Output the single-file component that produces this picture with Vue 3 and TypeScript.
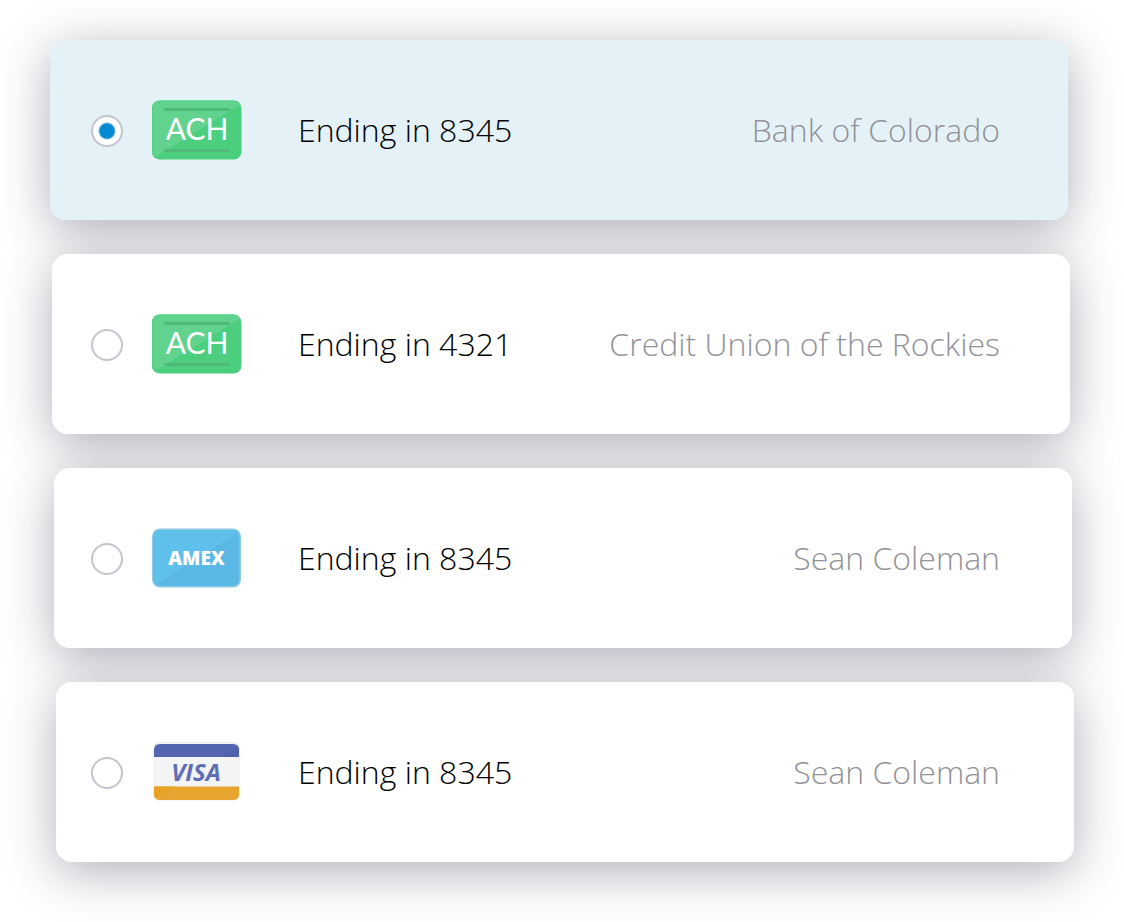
<script setup lang="ts">
import { ref } from 'vue'

type Brand = 'ach' | 'amex' | 'visa'

interface PaymentMethod {
  id: number
  brand: Brand
  ending: string
  holder: string
}

const methods: PaymentMethod[] = [
  { id: 1, brand: 'ach', ending: '8345', holder: 'Bank of Colorado' },
  { id: 2, brand: 'ach', ending: '4321', holder: 'Credit Union of the Rockies' },
  { id: 3, brand: 'amex', ending: '8345', holder: 'Sean Coleman' },
  { id: 4, brand: 'visa', ending: '8345', holder: 'Sean Coleman' },
]

const selected = ref<number>(1)
</script>

<template>
  <main class="methods">
    <label
      v-for="(method, index) in methods"
      :key="method.id"
      class="card"
      :class="{ selected: selected === method.id }"
      :style="{ '--shift': `${index * 2}px` }"
    >
      <input v-model="selected" class="radio" type="radio" name="payment-method" :value="method.id" />

      <svg v-if="method.brand === 'ach'" class="brand" viewBox="0 0 90 60" aria-hidden="true">
        <rect x="0" y="0.5" width="89.5" height="59" rx="8" fill="#4bcf7f" />
        <path d="M8 0.5H82Q86 0.500 88 4.500L3 57.500Q0 55.500 0 52V8Q0.500 0.500 8 0.500Z" fill="#56d285" />
        <path d="M8 1.500H82Q86 1.500 87.500 5L4 56Q1.500 54.500 1.500 52V8Q1.500 1.500 8 1.500Z" fill="#62d38f" />
        <path d="M13.500 9.500H76.500M13.500 50.500H76.500" stroke="#50b878" stroke-width="3" stroke-linecap="round" />
        <text class="ach" x="45" y="40" text-anchor="middle">ACH</text>
      </svg>

      <svg v-else-if="method.brand === 'amex'" class="brand" viewBox="0 0 90 60" aria-hidden="true">
        <rect x="0" y="0.500" width="89" height="59" rx="8" fill="#8fcbe2" />
        <rect x="1.500" y="2" width="86" height="56" rx="6.500" fill="#5bb8e5" />
        <path d="M8 2H81Q85 2 86.500 4L4 56.500Q1.500 55 1.500 52V8Q1.500 2 8 2Z" fill="#5ec0eb" />
        <text class="amex" x="44.500" y="37" text-anchor="middle">AMEX</text>
      </svg>

      <svg v-else class="brand" viewBox="0 0 90 60" aria-hidden="true">
        <rect x="1" y="0" width="87" height="59" rx="7" fill="#e7e8f2" />
        <rect x="1" y="1" width="87" height="58" rx="7" fill="#f3f5f5" />
        <path d="M2 15V8Q2 2 8 2H81Q87 2 87 8V15Z" fill="#5565b0" />
        <path d="M68 15L86 4.500Q87 6 87 8V15Z" fill="#5060ab" />
        <path d="M2 44.500H87V52Q87 58 81 58H8Q2 58 2 52Z" fill="#e6a52e" />
        <path d="M2 44.500H23L4 56Q2 54.500 2 52Z" fill="#e6a023" />
        <text class="visa" x="44" y="39" text-anchor="middle">VISA</text>
      </svg>

      <span class="ending">Ending in {{ method.ending }}</span>
      <span class="holder">{{ method.holder }}</span>
    </label>
  </main>
</template>

<style>
body {
  margin: 0;
  background: #fff;
}
</style>

<style scoped>
.methods {
  position: relative;
  z-index: 0;
  display: flex;
  flex-direction: column;
  gap: 34px;
  padding: 40px 50px 60px;
  overflow: hidden;
  font-family: 'Open Sans', 'Noto Sans', sans-serif;
}

.card {
  position: relative;
  box-sizing: border-box;
  display: flex;
  align-items: center;
  min-height: 180px;
  margin-left: var(--shift);
  margin-right: calc(6px - var(--shift));
  padding-left: calc(41px - var(--shift));
  padding-right: calc(68px + var(--shift));
  border-radius: 16px;
  background: #fff;
  cursor: pointer;
}

/* The shadow sits beneath every card, so it never darkens a neighbour. */
.card::before {
  content: '';
  position: absolute;
  inset: 0;
  z-index: -1;
  border-radius: 16px;
  box-shadow: 0 10px 50px rgba(35, 42, 66, 0.37);
}

.card.selected {
  background: #e4f1f7;
}

.radio {
  appearance: none;
  flex: none;
  box-sizing: border-box;
  width: 32px;
  height: 32px;
  margin: 2px 29px 0 0;
  border: 2px solid #c3c4cd;
  border-radius: 50%;
  background: #fff;
  cursor: pointer;
}

.radio:checked {
  background: radial-gradient(circle, #0389d0 0 7px, #fff 9px);
}

.radio:focus-visible {
  outline: 2px solid #0389d0;
  outline-offset: 3px;
}

.brand {
  flex: none;
  width: 90px;
  height: 60px;
  margin-right: 56px;
}

.ach {
  fill: #fff;
  font: 400 30px Lato, sans-serif;
}

.amex {
  fill: #fff;
  font: 800 19px 'Open Sans', sans-serif;
}

.visa {
  fill: #5e6db5;
  font: italic 700 24px 'Open Sans', sans-serif;
}

.ending,
.holder {
  font-size: 32px;
  font-weight: 300;
  line-height: 44px;
  white-space: nowrap;
}

.ending {
  color: #000;
}

.holder {
  margin-left: auto;
  color: #929298;
}
</style>
